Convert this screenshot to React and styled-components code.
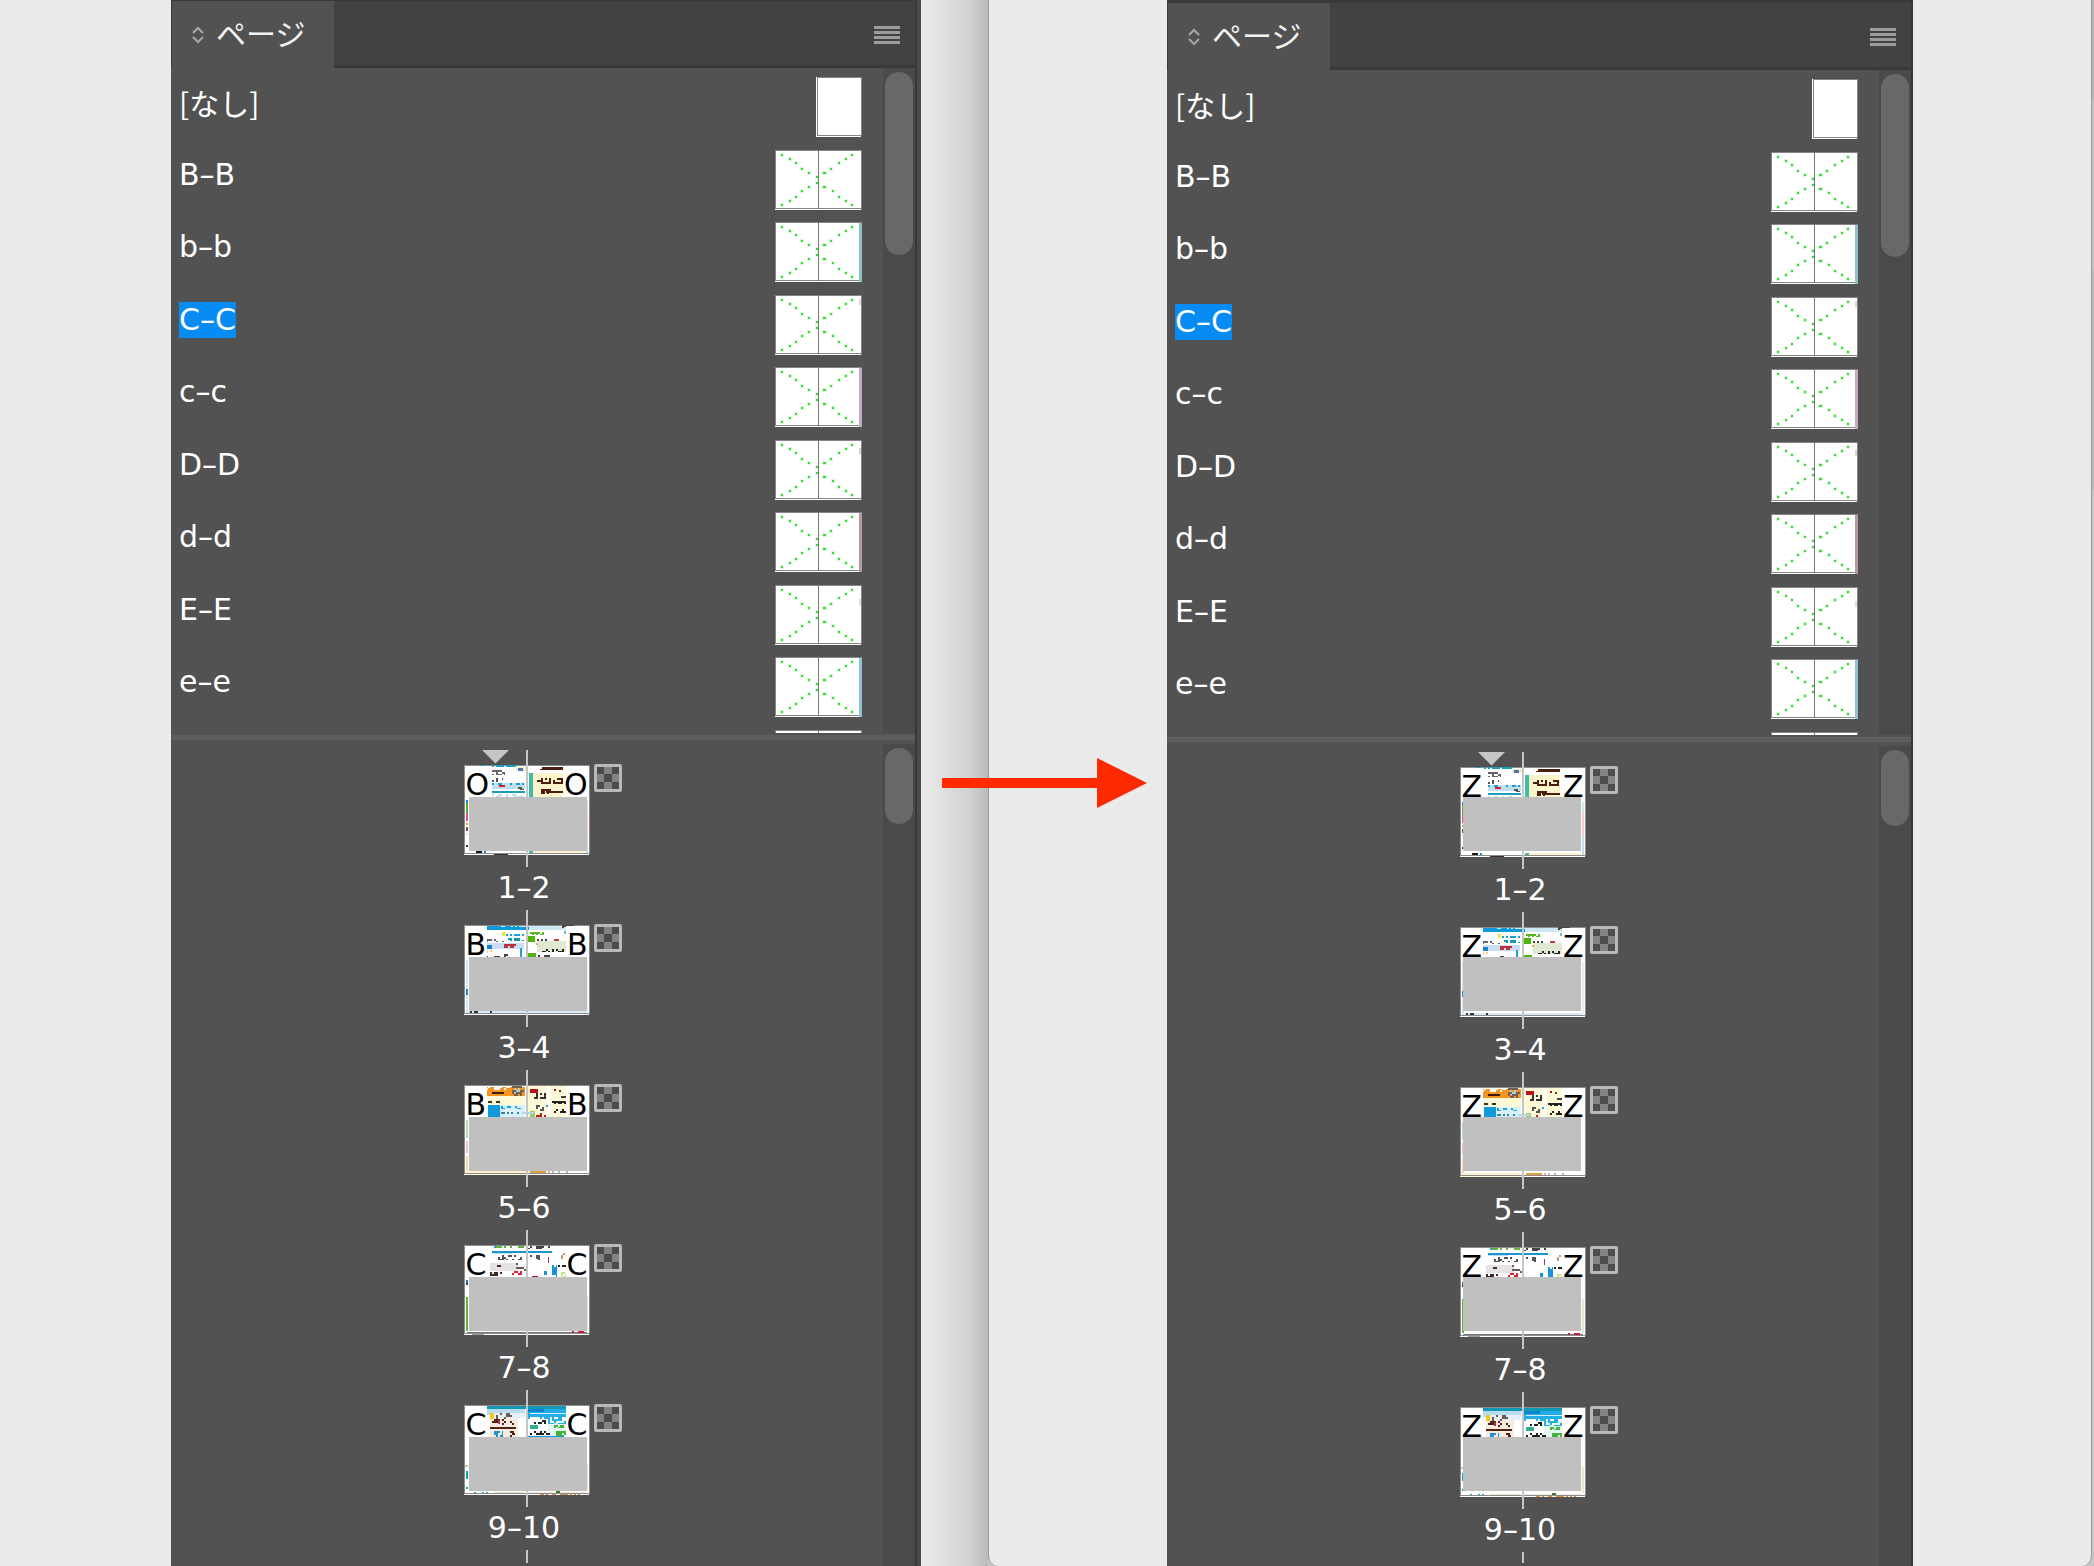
import { styled, createGlobalStyle } from 'styled-components';

const masters = [
  { name: '[なし]', blank: true },
  { name: 'B–B' },
  { name: 'b–b', edge: '#8cc3cb' },
  { name: 'C–C', selected: true, tick: ['#e6d3de', 4, 6] },
  { name: 'c–c', edge: '#c7a9c4' },
  { name: 'D–D', tick: ['#ddd0d3', 8, 6] },
  { name: 'd–d', edge: '#b59a9c' },
  { name: 'E–E', tick: ['#cfe6f0', 14, 6] },
  { name: 'e–e', edge: '#8dc3d8' },
  { name: '' },
];

// [x, y, width, height, colour, density] - with a density the block is broken up into specks
const spreads = [
  {
    pages: '1–2',
    art: [
      [12, 0, 42, 2, '#1b9fc0', 0.6], [52, 2, 10, 4, '#f3edc4'], [54, 3, 5, 5, '#5571b8'],
      [28, 6, 32, 12, '#ffffff'], [28, 5, 13, 5, '#666666', 0.5], [28, 13, 11, 4, '#555555', 0.4],
      [28, 18, 33, 6, '#bfe0f0'], [28, 18, 32, 2, '#1b9fd6', 0.5], [35, 20, 6, 2, '#d01f2c', 0.8],
      [50, 22, 10, 3, '#555555', 0.4], [28, 26, 33, 2, '#1b9fb8'], [28, 29, 32, 3, '#bfe0e8', 0.5],
      [65, 8, 4, 24, '#41bba9'], [69, 8, 31, 24, '#fbf5cc'], [78, 2, 22, 2, '#4d1d10', 0.8],
      [76, 4, 24, 1, '#4d1d10'], [71, 13, 28, 4, '#4d1d10', 0.4], [73, 17, 26, 2, '#4d1d10', 0.8],
      [77, 24, 10, 5, '#4d1d10', 0.6], [82, 26, 18, 2, '#4d1d10'],
      [2, 33, 2, 5, '#1484d1'], [2, 38, 2, 10, '#5ab020'], [2, 48, 2, 8, '#e64a84'],
      [2, 58, 2, 2, '#eb9a28'], [2, 62, 2, 4, '#695454'], [2, 68, 2, 2, '#ffdcbb'], [2, 80, 2, 2, '#3f1d18'],
      [122, 33, 2, 14, '#cfe8e2'], [122, 45, 2, 24, '#f9cbcc'], [122, 69, 2, 19, '#c2dfeb'],
      [12, 86, 6, 2, '#24150f'], [20, 86, 2, 2, '#178dcf'], [65, 86, 4, 3, '#41bba9'], [69, 86, 52, 3, '#fbf5cc'],
      [16, 89, 28, 1, '#3c2c24', 0.6],
    ],
  },
  {
    pages: '3–4',
    art: [
      [1, 1, 124, 4, '#cde8f5'], [1, 1, 60, 2, '#0e9ade', 0.6], [1, 1, 2, 4, '#0e9ade'], [20, 2, 45, 3, '#0e9ade'],
      [38, 7, 3, 4, '#f1e53c', 0.7], [42, 9, 18, 2, '#1b9fd6', 0.6], [20, 14, 22, 3, '#666666', 0.4],
      [44, 13, 16, 3, '#109bb0', 0.7], [20, 18, 40, 6, '#c9def3'], [20, 20, 8, 4, '#1484d1'],
      [38, 19, 14, 4, '#b8333a', 0.7], [56, 23, 2, 9, '#1b9fe0'], [20, 25, 8, 3, '#f5cf88', 0.7], [20, 29, 24, 3, '#444444', 0.4],
      [66, 7, 14, 3, '#55b91d', 0.5], [64, 11, 7, 6, '#4fb40b'], [71, 14, 14, 2, '#444444', 0.6], [86, 14, 9, 2, '#c83c48', 0.7],
      [73, 16, 34, 11, '#dfe9d1'], [72, 18, 2, 2, '#f0a848'], [78, 24, 29, 3, '#222222', 0.5], [64, 28, 8, 4, '#4fb40b'],
      [74, 30, 12, 2, '#444444', 0.6], [98, 0, 12, 3, '#4f4240', 0.7], [98, 4, 8, 5, '#84b4cc', 0.6],
      [2, 33, 2, 55, '#d4e8f3'], [2, 64, 2, 6, '#148ed3'], [4, 86, 118, 2, '#dbe9f2'], [6, 86, 22, 2, '#30383c', 0.5],
      [122, 33, 2, 55, '#e9eef0'],
    ],
  },
  {
    pages: '5–6',
    art: [
      [1, 1, 2, 10, '#f7941e'], [20, 2, 41, 9, '#f7941e'], [22, 1, 24, 4, '#ffffff', 0.55], [26, 7, 14, 2, '#3d1c10', 0.8],
      [48, 1, 12, 10, '#6f6058', 0.5], [50, 3, 8, 5, '#b6cad2', 0.5], [20, 11, 41, 9, '#fdf8d6'], [20, 14, 2, 4, '#b9131c'],
      [24, 16, 24, 2, '#333333', 0.4], [24, 20, 37, 12, '#d9f1fc'], [24, 20, 12, 12, '#1199dc'], [37, 21, 20, 3, '#16a5e2', 0.6],
      [37, 27, 18, 2, '#3c8498', 0.7], [64, 1, 19, 31, '#fdf8d6'], [86, 1, 23, 31, '#fdf8d6'],
      [66, 4, 8, 4, '#b9131c'], [70, 8, 12, 6, '#333333', 0.5], [90, 4, 2, 2, '#b9131c'], [95, 5, 12, 8, '#444444', 0.3],
      [88, 16, 20, 3, '#222222', 0.6], [88, 24, 18, 4, '#222222', 0.5], [72, 20, 8, 6, '#555555', 0.3], [82, 20, 2, 2, '#1b9fd6'],
      [66, 26, 5, 6, '#9fc969'], [72, 28, 10, 4, '#bf1e20', 0.6], [58, 27, 12, 2, '#b3dbe7'],
      [2, 33, 2, 20, '#b0dcbc'], [2, 56, 2, 12, '#f2bfd6'], [2, 71, 2, 15, '#fbd7ab'],
      [1, 86, 60, 3, '#fdf3cf'], [66, 86, 16, 2, '#dfa13d'], [84, 86, 34, 2, '#bbbbbb', 0.3], [1, 89, 60, 1, '#fdf8d6'],
    ],
  },
  {
    pages: '7–8',
    art: [
      [26, 1, 6, 2, '#1b9fd6', 0.8], [32, 1, 28, 2, '#5fb63a', 0.6], [64, 1, 24, 3, '#444444', 0.4],
      [28, 6, 60, 2, '#1b95cf'], [28, 8, 20, 1, '#bbdff0'], [34, 10, 26, 5, '#555555', 0.35], [26, 18, 28, 8, '#e3e3e3'],
      [33, 20, 6, 2, '#4d2a22', 0.8], [50, 18, 12, 8, '#6a5a52', 0.3], [26, 27, 12, 4, '#3c2724', 0.6], [48, 26, 10, 4, '#df2339', 0.4],
      [66, 10, 14, 5, '#555555', 0.4], [82, 12, 3, 6, '#aa3b3b', 0.4], [88, 20, 5, 12, '#1595d8', 0.8], [80, 26, 3, 4, '#1595d8', 0.7],
      [94, 20, 8, 2, '#222222', 0.6], [97, 27, 6, 5, '#cadf91', 0.8], [97, 4, 4, 14, '#c29a7b', 0.4], [68, 31, 6, 1, '#a81428'],
      [2, 34, 2, 4, '#2479b2'], [2, 38, 2, 2, '#343a27'], [2, 52, 2, 34, '#5cb82c'], [122, 52, 2, 34, '#ddebd3'],
      [3, 87, 120, 1, '#777777'], [104, 86, 16, 3, '#c91c3c', 0.4], [8, 89, 12, 1, '#999999'],
    ],
  },
  {
    pages: '9–10',
    art: [
      [1, 1, 124, 3, '#1398b3'], [1, 4, 60, 6, '#b9dcef'], [26, 8, 35, 5, '#e3f0f7'], [26, 13, 28, 19, '#f7eae1'],
      [26, 8, 4, 6, '#f5c71c', 0.6], [32, 8, 16, 6, '#6b5a50', 0.4], [28, 14, 22, 6, '#4e2217', 0.45], [26, 22, 26, 2, '#54220e'],
      [30, 26, 9, 6, '#1c92d6', 0.7], [42, 26, 9, 6, '#54220e', 0.4], [34, 15, 2, 4, '#c22940'],
      [64, 4, 40, 10, '#23ade8'], [64, 4, 16, 3, '#0e86cf'], [66, 8, 36, 1, '#d3effc'], [66, 12, 36, 2, '#ffffff', 0.4],
      [64, 14, 40, 18, '#e3f6f2'], [64, 14, 20, 16, '#ffffff'], [70, 15, 12, 4, '#222222', 0.6], [84, 14, 20, 5, '#23b0e3', 0.5],
      [66, 20, 8, 4, '#26b28c', 0.7], [66, 26, 20, 4, '#222222', 0.55], [90, 20, 14, 3, '#42b43c', 0.6], [92, 26, 10, 5, '#42b43c', 0.7],
      [64, 31, 36, 1, '#1595d8'], [1, 60, 3, 2, '#c5ccac'], [2, 66, 2, 8, '#12a2a8'], [2, 82, 2, 2, '#12a2a8'],
      [8, 87, 22, 2, '#33a3c1', 0.5], [30, 87, 30, 2, '#dcebc0'], [64, 87, 58, 2, '#f4ead9'], [68, 89, 50, 1, '#dd8c45', 0.5],
      [92, 86, 4, 2, '#3c7a33'], [122, 60, 2, 26, '#efe8c8'],
    ],
  },
];

const panels = {
  before: ['O', 'B', 'B', 'C', 'C'],
  after: ['Z', 'Z', 'Z', 'Z', 'Z'],
};

const dots = [
  [6, 4], [14, 8], [20, 12], [26, 18], [33, 22], [41, 26], [48, 22], [55, 18], [63, 12], [70, 8], [76, 4],
  [6, 54], [14, 50], [20, 46], [26, 40], [33, 36], [41, 32], [48, 36], [57, 40], [63, 46], [70, 50], [76, 54],
];

const specks = ([x, y, w, h, color, density], seed) => {
  if (!density) return [[x, y, w, h, color]];
  const out = [];
  let n = seed * 7919 + 13;
  for (let row = 0; row < h; row += 2) {
    for (let col = 0; col < w; col += 2) {
      n = (n * 1103515245 + 12345) % 2147483648;
      if (n / 2147483648 < density) {
        out.push([x + col, y + row, Math.min(2, w - col), Math.min(2, h - row), color]);
      }
    }
  }
  return out;
};

function MasterThumb({ blank, edge, tick }) {
  if (blank) {
    return (
      <svg width="46" height="60" shapeRendering="crispEdges" aria-hidden="true">
        <path fill="#fff" d="M0 0h45v60H0z" />
        <path fill="#858585" d="M1 0h45v59H1z" />
        <path fill="#fff" d="M2 1h43v57H2z" />
      </svg>
    );
  }
  return (
    <svg width="87" height="60" shapeRendering="crispEdges" aria-hidden="true">
      <path fill="#858585" d="M0 0h87v59H0z" />
      <path fill="#fff" d="M0 59h86v1H0zM1 1h85v57H1z" />
      {edge && <rect x="84" y="1" width="3" height="59" fill={edge} />}
      {tick && <rect x="84" y={tick[1]} width="2" height={tick[2]} fill={tick[0]} />}
      {dots.map(([x, y]) => (
        <g key={`${x}-${y}`}>
          <rect x={x - 1} y={y - 1} width={x === 48 ? 5 : 4} height="4" fill="#dcf9dc" />
          <rect x={x} y={y} width={x === 48 ? 3 : 2} height="2" fill="#3fd63f" />
        </g>
      ))}
      <path fill="#777" d="M43 0h1v59h-1z" />
    </svg>
  );
}

function SpreadArt({ art, current }) {
  return (
    <svg width="126" height="117" shapeRendering="crispEdges" aria-hidden="true">
      <g transform="translate(0 15)">
        <path fill="#8c8c8c" d="M0 0h126v89H0z" />
        <path fill="#fff" d="M0 89h125v1H0zM1 1h124v87H1z" />
        {art.flatMap((block, i) => specks(block, i + 1)).map(([x, y, w, h, color], i) => (
          <rect key={i} x={x} y={y} width={w} height={h} fill={color} />
        ))}
        <path fill="#8c8c8c" d="M0 88h126v1H0z" />
      </g>
      <path fill="#c6c6c6" d="M62 0h2v117h-2z" />
      {current && <path fill="#c6c6c6" shapeRendering="auto" d="M18 0h27L31.500 13.500z" />}
    </svg>
  );
}

function Checker() {
  return (
    <CheckerIcon width="28" height="28" viewBox="0 0 28 28" aria-hidden="true">
      <rect width="28" height="28" rx="2" fill="#b9b9b9" />
      <path fill="#4c4c4c" d="M3 3h22v22H3z" />
      <path fill="#838383" d="M10 3h8v7h-8zM3 10h7v8H3zM18 10h7v8h-7zM10 18h8v7h-8z" />
    </CheckerIcon>
  );
}

function PagesPanel({ letters, inset }) {
  return (
    <Panel $framed={!inset}>
      <TabBar $inset={inset}>
        <Tab type="button">
          <svg width="12" height="18" viewBox="0 0 12 18" fill="none" stroke="#a8a8a8" strokeWidth="2" aria-hidden="true">
            <path d="M1 7l5-5 5 5M1 11l5 5 5-5" />
          </svg>
          <TabLabel>ページ</TabLabel>
        </Tab>
        <MenuButton type="button" aria-label="メニュー">
          <svg width="26" height="18" shapeRendering="crispEdges" aria-hidden="true">
            <path fill="#9c9c9c" d="M0 0h26v3H0zM0 5h26v3H0zM0 10h26v3H0zM0 15h26v3H0z" />
          </svg>
        </MenuButton>
      </TabBar>
      <Masters>
        <MasterList>
          {masters.map(({ name, selected, ...thumb }) => (
            <MasterRow key={name}>
              <MasterName $selected={selected} $cjk={thumb.blank}>{name}</MasterName>
              <MasterThumb {...thumb} />
            </MasterRow>
          ))}
        </MasterList>
        <Track>
          <Handle $size={183} />
        </Track>
      </Masters>
      <Divider />
      <Spreads>
        <SpreadList>
          {spreads.map(({ pages, art }, i) => (
            <Spread key={pages}>
              <Sheet>
                <SpreadArt art={art} current={i === 0} />
                <Letter $side="left">{letters[i]}</Letter>
                <Letter $side="right">{letters[i]}</Letter>
                <Mask $shifted={inset} />
              </Sheet>
              <Checker />
              <Caption>{pages}</Caption>
            </Spread>
          ))}
          <SpineTail />
        </SpreadList>
        <Track>
          <Handle $size={76} />
        </Track>
      </Spreads>
    </Panel>
  );
}

export default function App() {
  return (
    <>
      <GlobalStyle />
      <Page>
        <Before>
          <PagesPanel letters={panels.before} />
        </Before>
        <After>
          <PagesPanel letters={panels.after} inset />
        </After>
        <Behind />
        <Arrow width="205" height="50" viewBox="0 0 205 50" aria-hidden="true">
          <path fill="#ff2a00" d="M0 20h155V0l50 25-50 25V30H0z" />
        </Arrow>
      </Page>
    </>
  );
}

const GlobalStyle = createGlobalStyle`
  * {
    box-sizing: border-box;
  }

  body {
    margin: 0;
    background: #ebebeb;
    color: #fff;
    font-family: 'DejaVu Sans', 'Noto Sans CJK JP', sans-serif;
    font-size: 30px;
  }

  ul, ol {
    margin: 0;
    padding: 0;
    list-style: none;
  }

  svg {
    display: block;
  }
`;

const Page = styled.main`
  position: relative;
  display: grid;
  grid-template-columns: 988fr 1104fr 2px;
  min-height: 100vh;
  background: #c4c4c4;
`;

const Before = styled.div`
  display: grid;
  grid-template-columns: 171fr 750fr 67fr;
  background: linear-gradient(90deg, #ebebeb 93%, #e2e2e2 95%, #d2d2d2 98%, #bbbbbb);
`;

const After = styled.div`
  display: grid;
  grid-template-columns: 178fr 746fr 178fr;
  background: #ebebeb;
  border: solid #999;
  border-width: 0 1px;
  border-radius: 0 0 10px 10px;

  &::before {
    content: '';
  }
`;

const Behind = styled.div`
  background: linear-gradient(#b4b8bc 0 100px, #c2c2c2 100px 270px, #b9beb6 270px 490px, #c6c6c6 490px);
`;

const Arrow = styled.svg`
  position: absolute;
  top: 758px;
  left: 45%;
`;

const Panel = styled.section`
  display: flex;
  flex-direction: column;
  min-width: 0;
  background: #525252;
  border-right: ${props => (props.$framed ? '4px solid #4a4a4a' : 'none')};
  box-shadow: inset -2px 0 #383838;

  ${Before} & {
    grid-column: 2;
  }
`;

const TabBar = styled.header`
  display: flex;
  justify-content: space-between;
  height: ${props => (props.$inset ? 70 : 68)}px;
  margin-right: 2px;
  background: #424242;
  border-top: ${props => (props.$inset ? 3 : 1)}px solid #393939;
  box-shadow: inset 0 -3px #393939;
`;

const Tab = styled.button`
  display: flex;
  align-items: center;
  gap: 12px;
  width: 163px;
  padding: 0 0 0 20px;
  background: #525252;
  border: 0;
  border-left: 1px solid #3c3c3c;
  color: #f2f2f2;
  font: 30px 'Noto Sans CJK JP', sans-serif;
  white-space: nowrap;
`;

const TabLabel = styled.span`
  padding-bottom: 6px;
`;

const MenuButton = styled.button`
  display: flex;
  align-items: center;
  padding: 0 15px;
  background: none;
  border: 0;
`;

const Masters = styled.div`
  display: flex;
  height: 665px;
  margin-right: 2px;
`;

const MasterList = styled.ul`
  flex: 1;
  overflow: hidden;
  padding-top: 3px;
`;

const MasterRow = styled.li`
  display: flex;
  align-items: flex-start;
  justify-content: space-between;
  height: 73px;
  padding: 6px 21px 0 8px;

  &:nth-child(even) {
    height: 72px;
  }
`;

const MasterName = styled.span`
  margin-top: 7px;
  line-height: 36px;
  font-family: ${props => (props.$cjk ? "'Noto Sans CJK JP', sans-serif" : 'inherit')};
  background: ${props => (props.$selected ? '#078bf5' : 'none')};
`;

const Track = styled.div`
  width: 32px;
  padding: 4px 2px 0;
  background: #4a4a4a;
`;

const Handle = styled.div`
  width: 28px;
  height: ${props => props.$size}px;
  border-radius: 14px;
  background: #686868;
`;

const Divider = styled.hr`
  width: calc(100% - 2px);
  height: 5px;
  margin: 2px 0 0;
  border: 0;
  background: #5d5d5d;
`;

const Spreads = styled.div`
  display: flex;
  flex: 1;
  margin-right: 2px;

  ${Track} {
    margin-top: 4px;
  }
`;

const SpreadList = styled.ol`
  display: flex;
  flex: 1;
  flex-direction: column;
  padding: 10px 1px 0 0;
`;

const Spread = styled.li`
  display: grid;
  grid-template-columns: 1fr 126px 1fr;
  grid-template-rows: 117px 43px;
  column-gap: 4px;
`;

const Sheet = styled.div`
  position: relative;
  grid-column: 2;
`;

const Letter = styled.span`
  position: absolute;
  top: 16px;
  ${props => props.$side}: 1px;
  padding: 4px 1px 0;
  background: #fff;
  color: #000;
  line-height: 30px;
`;

const Mask = styled.div`
  position: absolute;
  top: ${props => (props.$shifted ? 45 : 47)}px;
  left: ${props => (props.$shifted ? 3 : 5)}px;
  width: 118px;
  height: 54px;
  background: #c0c0c0;
`;

const CheckerIcon = styled.svg`
  margin-top: 14px;
`;

const Caption = styled.span`
  grid-column: 1 / -1;
  padding-right: 5px;
  line-height: 42px;
  text-align: center;
`;

const SpineTail = styled.li`
  flex: 1;
  align-self: center;
  width: 2px;
  margin-bottom: 3px;
  background: #c6c6c6;
`;
